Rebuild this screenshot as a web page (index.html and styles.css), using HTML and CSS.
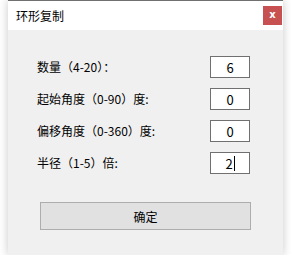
FILE: index.html
```html
<!DOCTYPE html>
<html lang="zh-CN">
<head>
    <meta charset="UTF-8">
    <title>环形复制</title>
    <link rel="stylesheet" href="styles.css">
</head>
<body>
    <div class="window">
        <div class="titlebar">
            <span class="title">环形复制</span>
            <div class="close">x</div>
        </div>
        <div class="content">
            <div class="row">
                <span class="label">数量（4-20）：</span>
                <div class="field">6</div>
            </div>
            <div class="row">
                <span class="label">起始角度（0-90）度:</span>
                <div class="field">0</div>
            </div>
            <div class="row">
                <span class="label">偏移角度（0-360）度:</span>
                <div class="field">0</div>
            </div>
            <div class="row">
                <span class="label">半径（1-5）倍:</span>
                <div class="field">2<span class="caret"></span></div>
            </div>
            <div class="button">确定</div>
        </div>
    </div>
</body>
</html>
```
FILE: styles.css
```css
* {
    box-sizing: border-box;
}
body {
    margin: 0;
    background: #fff;
    font-family: "Noto Sans CJK SC", "Noto Sans", sans-serif;
    font-size: 12px;
    color: #000;
}
.window {
    margin-left: 8px;
    width: 275px;
    height: 255px;
    border-top: 1px solid #707070;
    background: #f0f0f0;
    box-shadow: 0 0 9px rgba(0, 0, 0, 0.22);
    display: flex;
    flex-direction: column;
}
.titlebar {
    height: 29px;
    background: #fff;
    display: flex;
    align-items: center;
    justify-content: space-between;
    padding-left: 8px;
    padding-right: 1px;
}
.title {
    font-size: 12px;
    line-height: 1;
}
.close {
    width: 19px;
    height: 19px;
    background: #c75050;
    color: #fff;
    font-family: "DejaVu Sans", sans-serif;
    font-weight: bold;
    font-size: 10px;
    display: flex;
    align-items: center;
    justify-content: center;
    line-height: 1;
    padding-bottom: 2px;
}
.content {
    flex-grow: 1;
    padding: 26px 33px 0 29px;
    display: flex;
    flex-direction: column;
    gap: 10px;
}
.row {
    display: flex;
    align-items: center;
    justify-content: space-between;
    height: 22px;
}
.label {
    line-height: 1;
}
.field {
    width: 40px;
    height: 22px;
    border: 1px solid #707070;
    background: #fff;
    display: flex;
    align-items: center;
    justify-content: center;
    font-size: 13px;
}
.caret {
    display: inline-block;
    width: 1px;
    height: 15px;
    background: #000;
    margin-left: 1px;
}
.button {
    margin-top: 18px;
    margin-left: 3px;
    margin-right: -1px;
    height: 28px;
    border: 1px solid #adadad;
    background: #e1e1e1;
    display: flex;
    align-items: center;
    justify-content: center;
}
```
